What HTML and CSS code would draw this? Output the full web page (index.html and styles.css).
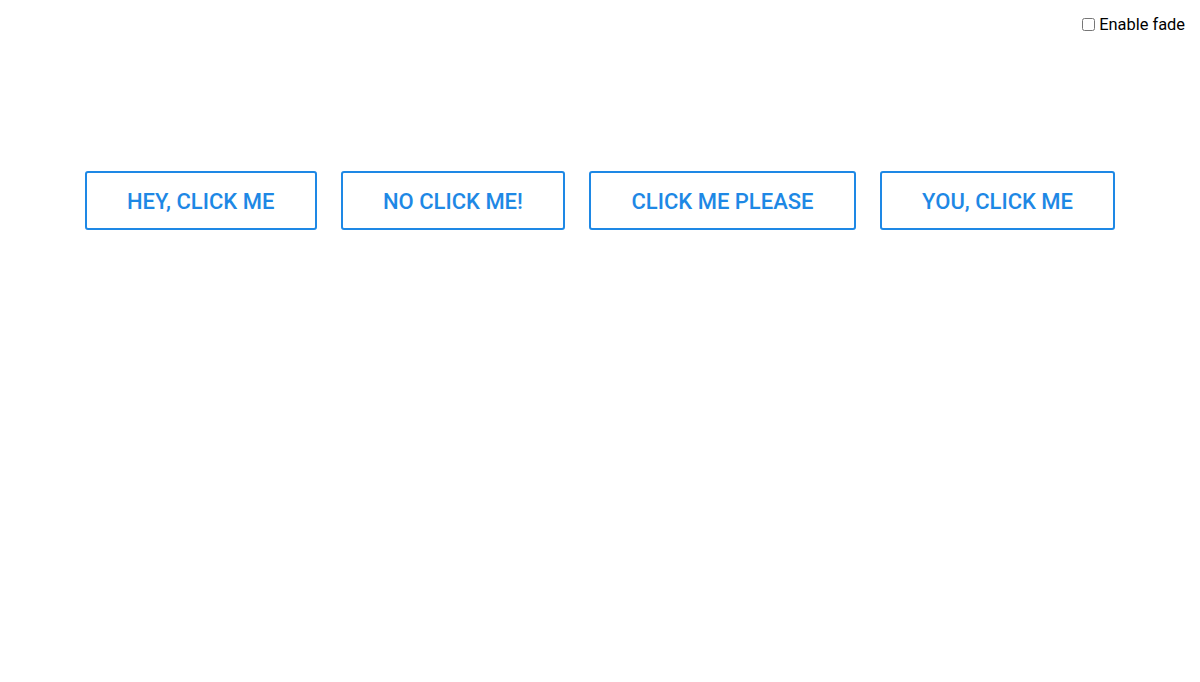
FILE: index.html
```html
<!DOCTYPE html>
<html>
<head>
<meta charset="utf-8">
<link rel="stylesheet" href="styles.css">
</head>
<body>
<div class="top">
  <label class="fade"><input type="checkbox" class="fade-box"> Enable fade</label>
</div>
<div class="buttons">
  <button class="btn">Hey, click me</button>
  <button class="btn">No click me!</button>
  <button class="btn">Click me please</button>
  <button class="btn">You, click me</button>
</div>
</body>
</html>
```
FILE: styles.css
```css
html, body {
  margin: 0;
  padding: 0;
  background: #fff;
  font-family: Roboto, "Liberation Sans", sans-serif;
}
.top {
  display: flex;
  justify-content: flex-end;
  padding: 13px 15px 0 0;
  height: 23px;
}
.fade {
  font-size: 16.4px;
  color: #000;
  display: flex;
  align-items: center;
}
.fade-box {
  margin: 0 4px 0 0;
  width: 13px;
  height: 13px;
}
.buttons {
  display: flex;
  justify-content: center;
  gap: 24px;
  margin-top: 135px;
}
.btn {
  font-family: Roboto, "Liberation Sans", sans-serif;
  font-size: 22px;
  font-weight: 500;
  text-transform: uppercase;
  color: #1e88e5;
  background: #fff;
  border: 2px solid #1e88e5;
  border-radius: 3px;
  height: 59px;
  padding: 2px 40.3px 0;
}
```
